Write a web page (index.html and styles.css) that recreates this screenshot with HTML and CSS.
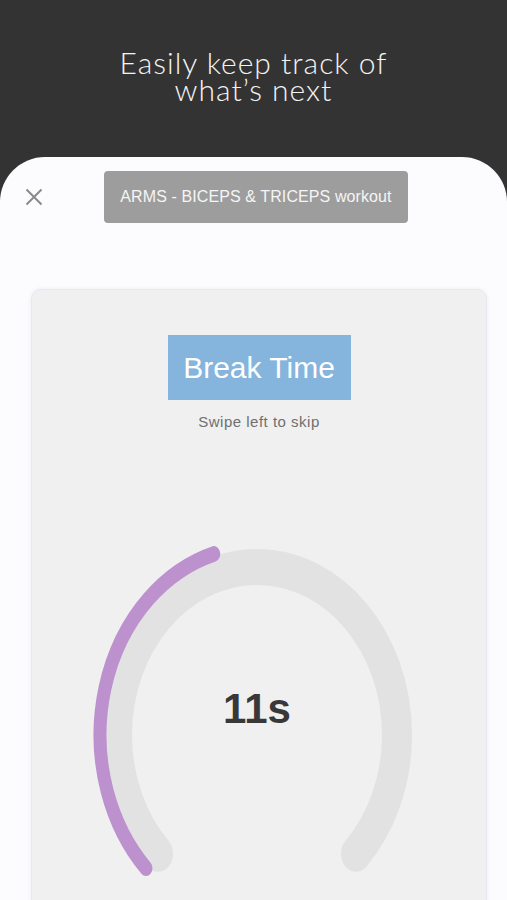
FILE: index.html
```html
<!DOCTYPE html>
<html lang="en">
<head>
<meta charset="utf-8">
<title>Break Time</title>
<link rel="stylesheet" href="styles.css">
</head>
<body>
<div class="screen">
  <header class="hero">
    <h1 class="hero-title"><span class="hero-line">Easily keep track of</span><span class="hero-line">what’s next</span></h1>
  </header>
  <main class="panel">
    <div class="topbar">
      <button class="close" aria-label="Close">
        <svg viewBox="0 0 18 18" width="18" height="18"><path d="M1.5 1.5 L16.5 16.5 M16.5 1.5 L1.5 16.5" stroke="#8a8a8a" stroke-width="2" fill="none"/></svg>
      </button>
      <div class="workout-pill">ARMS - BICEPS &amp; TRICEPS workout</div>
    </div>
    <section class="card">
      <div class="break-badge">Break Time</div>
      <p class="hint">Swipe left to skip</p>
      <div class="gauge">
        <svg class="gauge-svg" viewBox="-170 -170 340 340" preserveAspectRatio="none">
          <path d="M -98.99 98.99 A 140 140 0 1 1 98.99 98.99" stroke="#e2e2e2" stroke-width="30" stroke-linecap="round" fill="none"/>
          <path d="M -111.0 111.0 A 157 157 0 0 1 -43.3 -150.9" stroke="#bc91cd" stroke-width="13" stroke-linecap="round" fill="none"/>
        </svg>
        <div class="gauge-value">11s</div>
      </div>
    </section>
  </main>
</div>
</body>
</html>
```
FILE: styles.css
```css
html, body {
  margin: 0;
  padding: 0;
}
body {
  background: #333333;
  width: 507px;
  height: 900px;
  overflow: hidden;
  font-family: "Liberation Sans", Arial, sans-serif;
}
.screen {
  display: flex;
  flex-direction: column;
  height: 900px;
}
.hero {
  height: 157px;
  box-sizing: border-box;
  padding-top: 49px;
  flex: none;
}
.hero-title {
  margin: 0;
  display: flex;
  flex-direction: column;
  align-items: center;
  color: #f3f3f3;
  font-family: Lato, "Open Sans", sans-serif;
  font-weight: 300;
  font-size: 30px;
  line-height: 27px;
  letter-spacing: 1px;
}
.hero-line {
  display: block;
  height: 27px;
}
.panel {
  flex: 1;
  background: #fcfbfd;
  border-radius: 45px 45px 0 0;
  overflow: hidden;
  display: flex;
  flex-direction: column;
}
.topbar {
  display: flex;
  align-items: center;
  padding: 14px 0 0 25px;
  height: 52px;
}
.close {
  border: 0;
  background: none;
  padding: 0;
  width: 18px;
  height: 18px;
  display: flex;
}
.workout-pill {
  margin-left: 61px;
  width: 304px;
  height: 52px;
  box-sizing: border-box;
  background: #9d9d9d;
  border-radius: 4px;
  color: #f5f5f5;
  font-size: 16px;
  letter-spacing: 0.1px;
  display: flex;
  align-items: center;
  justify-content: center;
}
.card {
  margin: 66px 20px 0 31px;
  height: 640px;
  flex: none;
  background: #f0f0f0;
  border-radius: 10px;
  border: 1px solid #e9e8f1;
  box-shadow: 0 0 4px rgba(130, 120, 170, 0.12);
  display: flex;
  flex-direction: column;
  align-items: center;
}
.break-badge {
  margin-top: 45px;
  width: 183px;
  height: 65px;
  line-height: 65px;
  background: #85b4dc;
  color: #ffffff;
  font-size: 30px;
  text-align: center;
}
.hint {
  margin: 13px 0 0;
  font-size: 15px;
  line-height: 18px;
  letter-spacing: 0.5px;
  color: #6f6f6f;
}
.gauge {
  position: relative;
  margin-top: 100px;
  margin-right: 4px;
  width: 340px;
  height: 408px;
}
.gauge-svg {
  display: block;
  width: 340px;
  height: 408px;
}
.gauge-value {
  position: absolute;
  left: 0;
  right: 0;
  top: 157px;
  text-align: center;
  font-size: 42px;
  line-height: 42px;
  font-weight: 700;
  color: #383838;
}
```
